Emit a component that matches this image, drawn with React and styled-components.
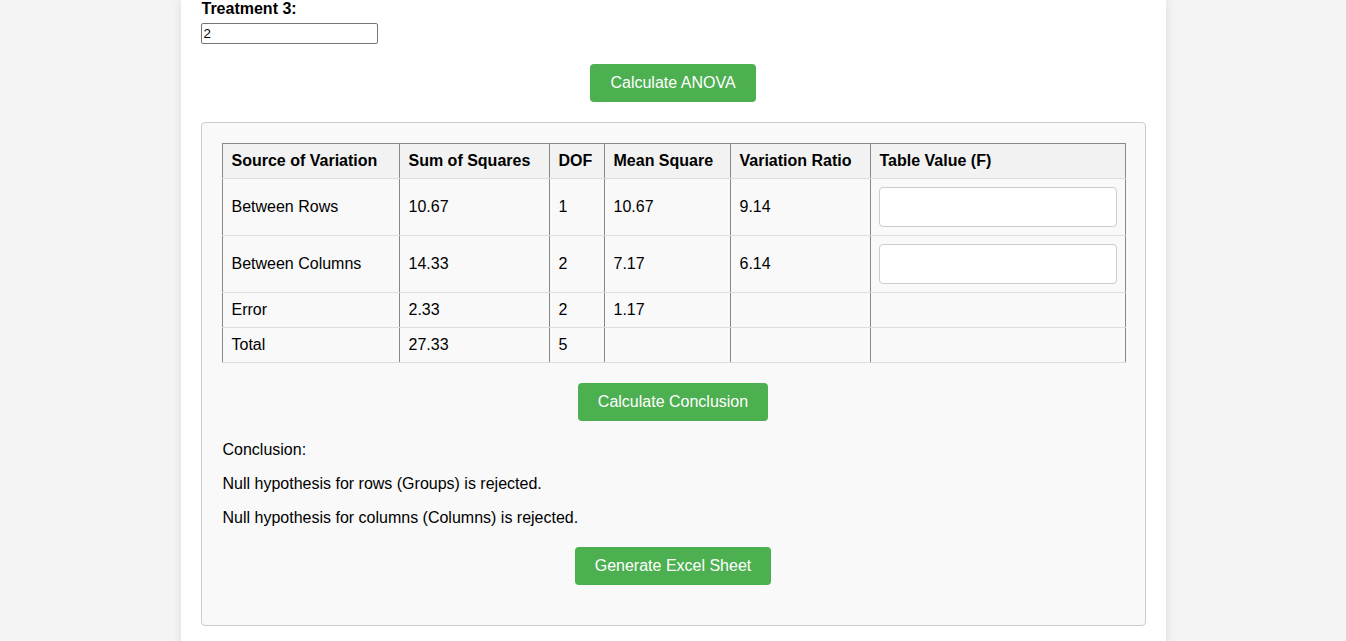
import React from "react";
import styled, { createGlobalStyle } from "styled-components";

const Global = createGlobalStyle`
  html, body { margin: 0; padding: 0; }
  body {
    background: #f4f4f4;
    font-family: "Liberation Sans", Arial, sans-serif;
    color: #000;
    overflow: hidden;
  }
`;

const Container = styled.div`
  box-sizing: border-box;
  width: 985px;
  min-height: 660px;
  margin: 0 auto;
  padding: 0 20px 20px;
  background: #fff;
  box-shadow: 0 0 10px rgba(0, 0, 0, 0.1);
`;

const Field = styled.div`
  display: flex;
  flex-direction: column;
  align-items: flex-start;
`;

const Label = styled.label`
  display: block;
  font-weight: bold;
  font-size: 16px;
  line-height: 18px;
  margin-left: 1px;
  margin-bottom: 5px;
`;

const SmallInput = styled.input`
  box-sizing: border-box;
  width: 177px;
  height: 21px;
  padding: 1px 2px;
  font-family: "Liberation Sans", Arial, sans-serif;
  font-size: 13.33px;
  border: 1px solid #767676;
  border-radius: 2px;
  background: #fff;
  color: #000;
`;

const ButtonRow = styled.div`
  display: flex;
  justify-content: center;
  margin-top: 20px;
`;

const Button = styled.button`
  box-sizing: border-box;
  height: 38px;
  padding: 0 20px;
  background: #4caf50;
  color: #fff;
  border: none;
  border-radius: 4px;
  font-family: "Liberation Sans", Arial, sans-serif;
  font-size: 16px;
  cursor: pointer;
`;

const Panel = styled.div`
  margin-top: 20px;
  padding: 20px 20px 40px;
  background: #f9f9f9;
  border: 1px solid #ccc;
  border-radius: 4px;
`;

const Table = styled.table`
  width: 100%;
  border-collapse: collapse;
  table-layout: fixed;
  font-size: 16px;
`;

const Th = styled.th`
  text-align: left;
  font-weight: bold;
  padding: 8px 8px 8px 9px;
  line-height: 18px;
  background: #f2f2f2;
  border-top: 1px solid #888;
  border-bottom: 1px solid #ddd;
  border-left: 1px solid #888;
  border-right: 1px solid #888;
`;

const Td = styled.td`
  text-align: left;
  padding: 8px 8px 8px 9px;
  line-height: 18px;
  height: ${(p) => (p.$tall ? "40px" : "18px")};
  border-top: 1px solid #ddd;
  border-bottom: 1px solid #ddd;
  border-left: 1px solid #888;
  border-right: 1px solid #888;
  vertical-align: middle;
`;

const FInput = styled.input`
  display: block;
  box-sizing: border-box;
  width: calc(100% + 1px);
  margin-left: -1px;
  height: 40px;
  padding: 10px;
  border: 1px solid #ccc;
  border-radius: 4px;
  background: #fff;
  font-family: "Liberation Sans", Arial, sans-serif;
  font-size: 16px;
`;

const Conclusion = styled.div`
  margin-top: 20px;
  padding-left: 1px;
`;

const Line = styled.p`
  margin: 0 0 16px;
  font-size: 16px;
  line-height: 18px;
`;

const rows = [
  { name: "Between Rows", ss: "10.67", dof: "1", ms: "10.67", vr: "9.14", input: true },
  { name: "Between Columns", ss: "14.33", dof: "2", ms: "7.17", vr: "6.14", input: true },
  { name: "Error", ss: "2.33", dof: "2", ms: "1.17", vr: "", input: false },
  { name: "Total", ss: "27.33", dof: "5", ms: "", vr: "", input: false },
];

const cols = [177, 150, 55, 126, 140, 255];

export default function App() {
  return (
    <>
      <Global />
      <Container>
        <Field>
          <Label htmlFor="t3">Treatment 3:</Label>
          <SmallInput id="t3" defaultValue="2" />
        </Field>
        <ButtonRow>
          <Button>Calculate ANOVA</Button>
        </ButtonRow>
        <Panel>
          <Table>
            <colgroup>
              {cols.map((w, i) => (
                <col key={i} style={{ width: w }} />
              ))}
            </colgroup>
            <thead>
              <tr>
                <Th>Source of Variation</Th>
                <Th>Sum of Squares</Th>
                <Th>DOF</Th>
                <Th>Mean Square</Th>
                <Th>Variation Ratio</Th>
                <Th>Table Value (F)</Th>
              </tr>
            </thead>
            <tbody>
              {rows.map((r) => (
                <tr key={r.name}>
                  <Td $tall={r.input}>{r.name}</Td>
                  <Td $tall={r.input}>{r.ss}</Td>
                  <Td $tall={r.input}>{r.dof}</Td>
                  <Td $tall={r.input}>{r.ms}</Td>
                  <Td $tall={r.input}>{r.vr}</Td>
                  <Td $tall={r.input}>{r.input ? <FInput /> : null}</Td>
                </tr>
              ))}
            </tbody>
          </Table>
          <ButtonRow>
            <Button>Calculate Conclusion</Button>
          </ButtonRow>
          <Conclusion>
            <Line>Conclusion:</Line>
            <Line>Null hypothesis for rows (Groups) is rejected.</Line>
            <Line>Null hypothesis for columns (Columns) is rejected.</Line>
          </Conclusion>
          <ButtonRow>
            <Button>Generate Excel Sheet</Button>
          </ButtonRow>
        </Panel>
      </Container>
    </>
  );
}
